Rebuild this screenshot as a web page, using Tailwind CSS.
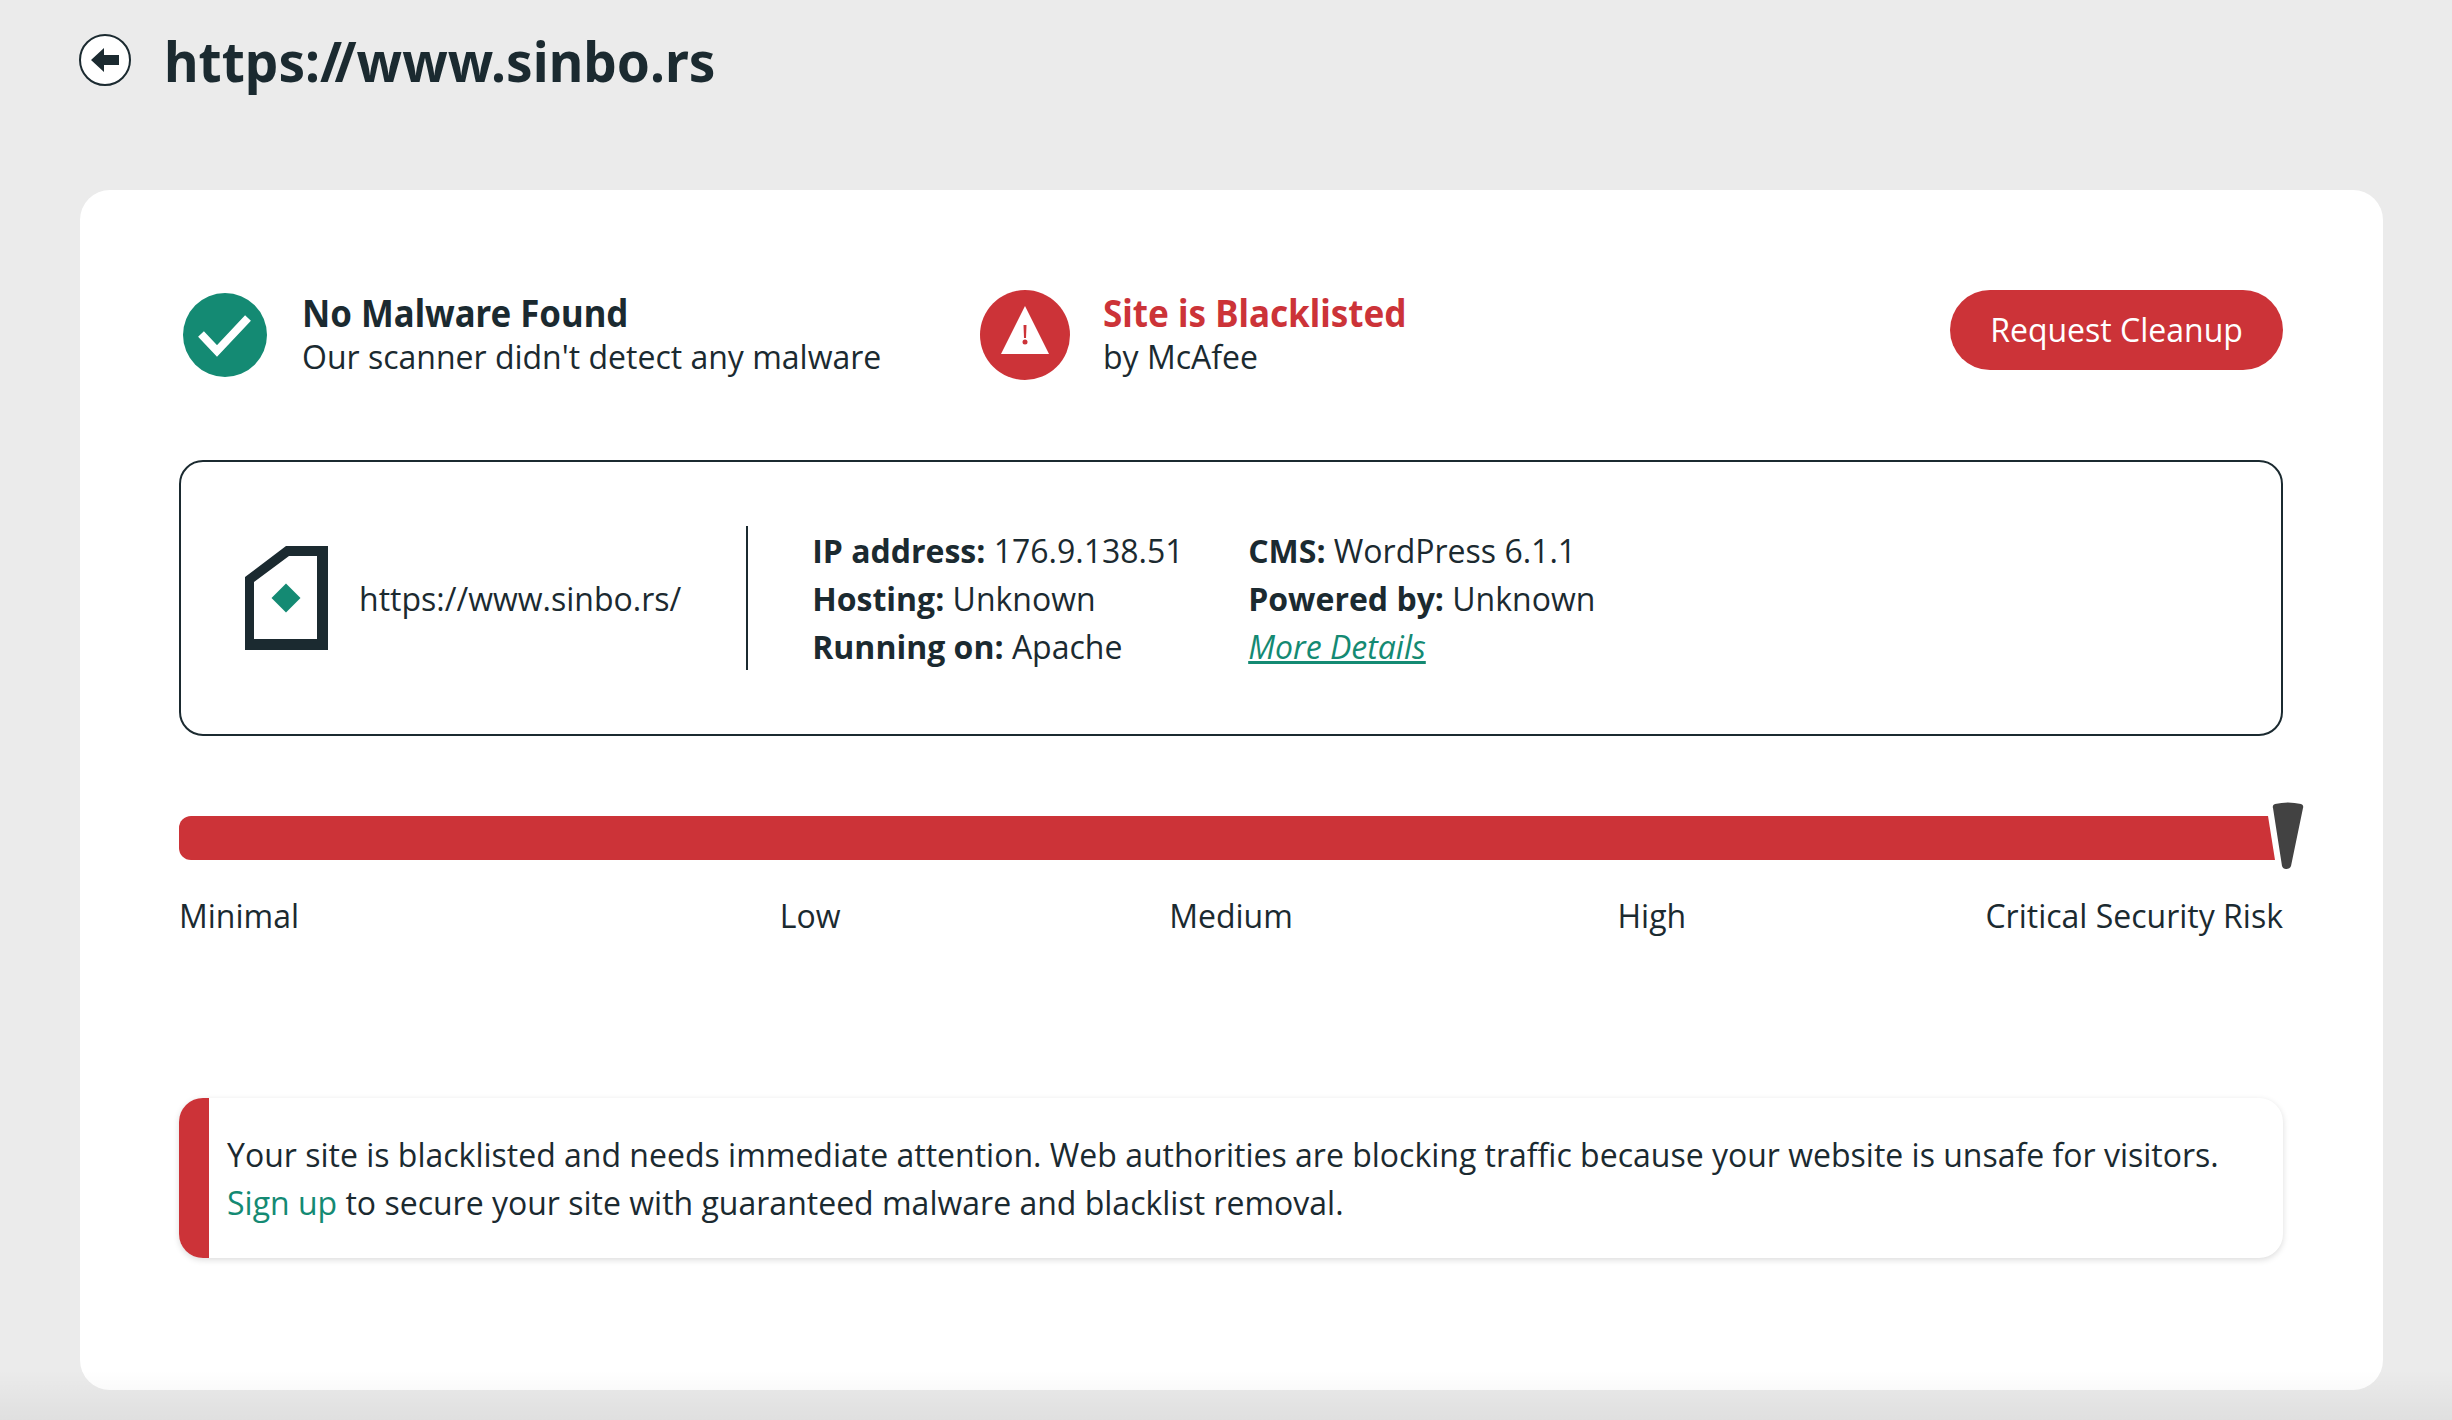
<!DOCTYPE html>
<html lang="en">
<head>
    <meta charset="UTF-8">
    <title>https://www.sinbo.rs</title>
    <script src="https://cdn.jsdelivr.net/npm/@tailwindcss/browser@4"></script>
</head>
<body class="relative h-[1420px] overflow-hidden bg-[#ebebeb] font-['Open_Sans',sans-serif] text-[#1b2a30]">
    <header class="flex h-[190px] items-start pl-[79px] pt-[34px]">
        <a href="#" class="flex h-[52px] w-[52px] items-center justify-center rounded-full border-2 border-[#1b2a30] bg-white">
            <svg class="h-[24px] w-[28px]" viewBox="0 0 28 24" fill="#1b2a30"><path d="M0 12 13 0v7h15v10H13v7z"/></svg>
        </a>
        <h1 class="ml-[33px] origin-left scale-x-[.95] font-['Noto_Sans',sans-serif] text-[56px] leading-[52px] font-bold">https:<span class="tracking-[-8px]">//</span><span class="ml-[8px]">www.sinbo.rs</span></h1>
    </header>

    <main class="ml-[80px] h-[1200px] w-[2303px] rounded-[30px] bg-white pl-[99px] pr-[100px] pt-[100px]">
        <section class="flex h-[90px] items-center">
            <div class="flex w-[801px] items-center">
                <svg class="ml-[4px] h-[84px] w-[84px] shrink-0" viewBox="0 0 84 84"><circle cx="42" cy="42" r="42" fill="#148a73"/><path d="M18 41l16 17 31-33" fill="none" stroke="#fff" stroke-width="8"/></svg>
                <div class="ml-[35px]">
                    <h2 class="-mt-[1px] mb-[1px] origin-left scale-x-[.915] whitespace-nowrap font-['Noto_Sans',sans-serif] text-[38px] leading-[44px] font-bold">No Malware Found</h2>
                    <p class="text-[32px] leading-[44px]">Our scanner didn't detect any malware</p>
                </div>
            </div>
            <div class="flex items-center">
                <svg class="h-[90px] w-[90px] shrink-0" viewBox="0 0 90 90"><circle cx="45" cy="45" r="45" fill="#cc3338"/><path d="M45 16 69 64H21z" fill="#fff"/><path d="M43.500 35h3l-.5 13h-2z" fill="#cc3338"/><circle cx="45" cy="52" r="2.500" fill="#cc3338"/></svg>
                <div class="ml-[33px]">
                    <h2 class="-mt-[1px] mb-[1px] origin-left scale-x-[.922] whitespace-nowrap font-['Noto_Sans',sans-serif] text-[38px] leading-[44px] font-bold text-[#cc3338]">Site is Blacklisted</h2>
                    <p class="text-[32px] leading-[44px]">by McAfee</p>
                </div>
            </div>
            <button class="ml-auto h-[80px] w-[333px] self-start rounded-full bg-[#cc3338] text-[32px] text-white">Request Cleanup</button>
        </section>

        <section class="mt-[80px] flex h-[276px] items-center rounded-[24px] border-2 border-[#1b2a30] pl-[64px]">
            <svg class="h-[104px] w-[83px] shrink-0" viewBox="0 0 83 104"><path fill-rule="evenodd" fill="#1b2a30" d="M0 31 41 0h42v104H0zM9 36v57h63V10H44z"/><path fill="#148a73" d="M41 37.500 55.500 52 41 66.500 26.500 52z"/></svg>
            <span class="ml-[31px] pt-[2px] text-[32px]">https://www.sinbo.rs/</span>
            <div class="ml-[65px] mr-[64px] h-[144px] w-[2px] bg-[#1b2a30]"></div>
            <div class="w-[436px] pt-[2px] text-[32px] leading-[48px]">
                <p><b>IP address:</b> 176.9.138.51</p>
                <p><b>Hosting:</b> Unknown</p>
                <p><b>Running on:</b> Apache</p>
            </div>
            <div class="pt-[2px] text-[32px] leading-[48px]">
                <p><b>CMS:</b> WordPress 6.1.1</p>
                <p><b>Powered by:</b> Unknown</p>
                <p><a href="#" class="text-[#148a73] italic underline">More Details</a></p>
            </div>
        </section>

        <section class="relative mt-[80px]">
            <div class="h-[44px] w-[2096px] rounded-l-[12px] bg-[#cc3338] [clip-path:polygon(0_0,2089px_0,100%_100%,0_100%)]"></div>
            <svg class="absolute left-[2093px] top-[-14px] h-[68px] w-[32px]" viewBox="0 0 32 68" fill="#424242"><path d="M1 6Q0 3 3 2 16-1 29 2 32 3 31 6L19 64Q18 67 14 67 11 67 10 64z"/></svg>
            <div class="mt-[32px] grid grid-cols-5 text-[32px] leading-[48px]">
                <span>Minimal</span>
                <span class="text-center">Low</span>
                <span class="text-center">Medium</span>
                <span class="text-center">High</span>
                <span class="text-right whitespace-nowrap">Critical Security Risk</span>
            </div>
        </section>

        <section class="mt-[158px] flex h-[160px] overflow-hidden rounded-[24px] bg-white shadow-[0_2px_6px_rgba(0,0,0,0.14)]">
            <div class="w-[30px] shrink-0 bg-[#cc3338]"></div>
            <p class="pl-[18px] pt-[33px] text-[32px] leading-[48px]">Your site is blacklisted and needs immediate attention. Web authorities are blocking traffic because your website is unsafe for visitors.<br><a href="#" class="text-[#148a73]">Sign up</a> to secure your site with guaranteed malware and blacklist removal.</p>
        </section>
    </main>

    <div class="pointer-events-none absolute inset-x-0 bottom-0 h-[50px] bg-linear-to-b from-transparent to-black/5"></div>
</body>
</html>
